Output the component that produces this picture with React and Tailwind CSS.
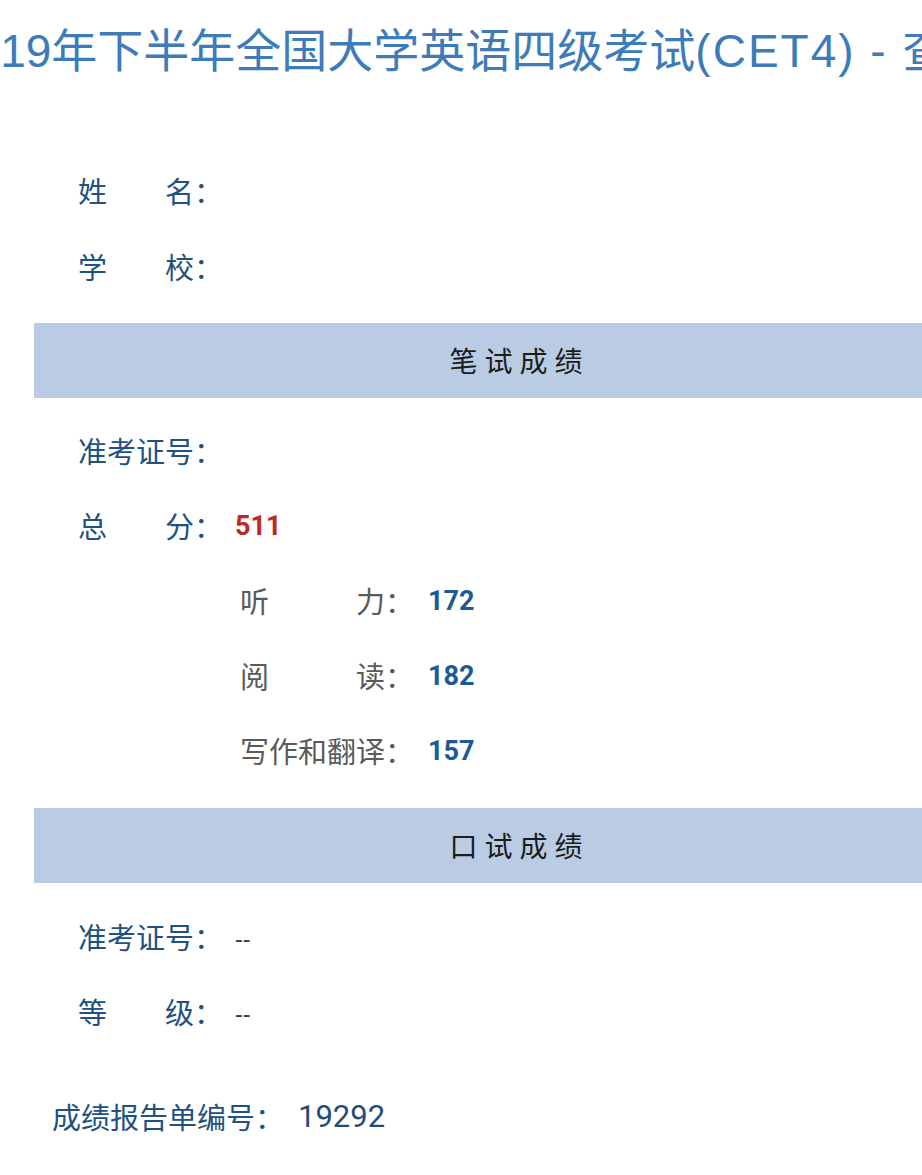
import React from "react";

const font = "font-['Noto_Sans','Noto_Sans_CJK_SC',sans-serif]";
const latin = "font-['Liberation_Sans','Noto_Sans_CJK_SC',sans-serif]";

const Label = ({ parts, width, color }) => (
  <div className={`flex justify-between ${width} ${color}`}>
    {parts.map((p, i) => (
      <span key={i}>{p}</span>
    ))}
  </div>
);

const InfoRow = ({ parts, value, valueClass = "" }) => (
  <div className="h-[75px] flex items-center pl-[44px] text-[29px] text-[#215181]">
    <Label parts={parts} width="w-[145px]" color="text-[#215181]" />
    <span className={`ml-[12px] ${valueClass}`}>{value}</span>
  </div>
);

const SubRow = ({ parts, value }) => (
  <div className="h-[75px] flex items-center pl-[206px] text-[29px]">
    <Label parts={parts} width="w-[174px]" color="text-[#5a5a5a]" />
    <span className="ml-[14px] font-['Roboto',sans-serif] font-bold text-[27px] text-[#1d5a92]">{value}</span>
  </div>
);

const SectionBar = ({ title }) => (
  <div className="h-[75px] w-[964px] bg-[#b9cce4] flex items-center justify-center">
    <span className="text-[28px] tracking-[7px] pl-[7px] text-[#1c1c1c]">{title}</span>
  </div>
);

export default function App() {
  return (
    <div className={`w-[922px] h-[1175px] overflow-hidden bg-white ${font}`}>
      {/* header title, wider than the window */}
      <div className="h-[100px] flex items-center whitespace-nowrap">
        <h1 className="ml-[-51px] text-[46px] font-normal text-[#3d7cb9] leading-none">
          <span className={latin}>2019</span>年下半年全国大学英语四级考试
          <span className={`${latin} tracking-[2px]`}>(CET4) - </span>查询结果
        </h1>
      </div>

      <div className="ml-[34px] w-[964px]">
        <div className="pt-[54px]">
          <div className="h-[76px] flex items-center pl-[44px] text-[29px]">
            <Label parts={["姓", "名："]} width="w-[145px]" color="text-[#215181]" />
          </div>
          <div className="h-[76px] flex items-center pl-[44px] text-[29px]">
            <Label parts={["学", "校："]} width="w-[145px]" color="text-[#215181]" />
          </div>
        </div>

        <div className="mt-[17px]">
          <SectionBar title="笔试成绩" />
        </div>

        <div className="pt-[16px]">
          <InfoRow parts={["准考证号："]} value="" />
          <InfoRow
            parts={["总", "分："]}
            value="511"
            valueClass="font-['Roboto',sans-serif] font-bold text-[27px] text-[#c1291d]"
          />
          <SubRow parts={["听", "力："]} value="172" />
          <SubRow parts={["阅", "读："]} value="182" />
          <SubRow parts={["写作和翻译："]} value="157" />
        </div>

        <div className="mt-[19px]">
          <SectionBar title="口试成绩" />
        </div>

        <div className="pt-[17px]">
          <InfoRow parts={["准考证号："]} value="--" valueClass="text-[#2a3f55] text-[24px]" />
          <InfoRow parts={["等", "级："]} value="--" valueClass="text-[#2a3f55] text-[24px]" />
        </div>

        <div className="mt-[30px] h-[75px] flex items-center pl-[18px] text-[29px] text-[#215181]">
          <span>成绩报告单编号：</span>
          <span className="ml-[14px] font-['Roboto',sans-serif] text-[31px] text-[#1f4d78]">19292</span>
        </div>
      </div>
    </div>
  );
}
